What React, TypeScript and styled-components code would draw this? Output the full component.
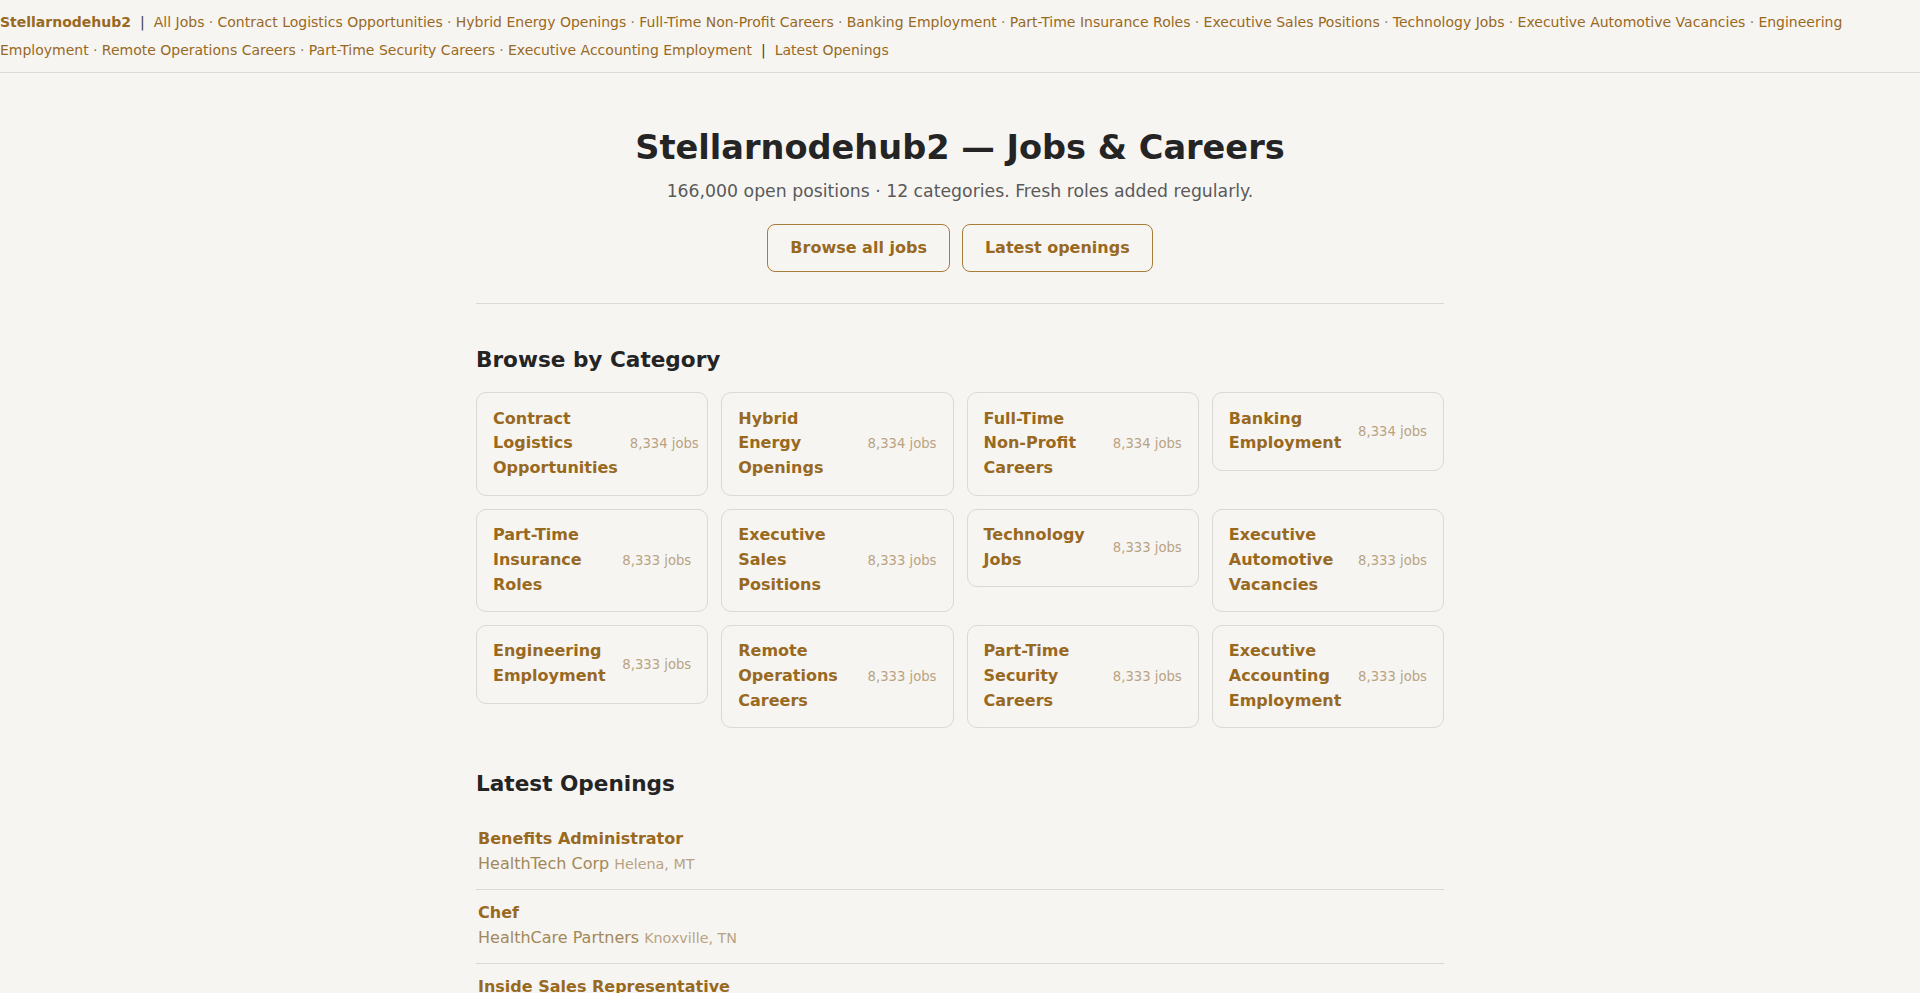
import React from 'react'
import styled, { createGlobalStyle } from 'styled-components'

const gold = '#98691f'
const tan = '#a38859'
const pale = '#b7a382'
const line = '#ddd8d0'

const GlobalStyle = createGlobalStyle`
  body {
    margin: 0;
    background: #f7f5f2;
    color: #242424;
    font-family: 'DejaVu Sans', 'Noto Sans', sans-serif;
  }

  a {
    color: ${gold};
    text-decoration: none;
  }
`

const TopNav = styled.nav`
  padding: 8px 0;
  font-size: 14px;
  line-height: 28px;
  border-bottom: 1px solid ${line};
`

const Brand = styled.a`
  font-weight: 700;
`

const Pipe = styled.span`
  margin: 0 9px;
  color: #3a3a3a;
`

const Dot = styled.span`
  margin: 0 4.3px;
  color: #8d7a5c;
`

const Main = styled.main`
  max-width: 968px;
  margin: 0 auto;
`

const Hero = styled.header`
  padding: 55px 0 31px;
  text-align: center;
  border-bottom: 1px solid ${line};
`

const Title = styled.h1`
  margin: 0 0 11px;
  font-size: 33.6px;
  line-height: 1.2;
  font-weight: 700;
`

const Lead = styled.p`
  margin: 0 0 19px;
  font-size: 17.3px;
  line-height: 1.5;
  color: #5a5a5a;
`

const ButtonRow = styled.div`
  display: flex;
  justify-content: center;
  gap: 12px;
`

const OutlineButton = styled.a`
  padding: 11px 22px;
  border: 1px solid #a87d3a;
  border-radius: 8px;
  font-size: 16px;
  line-height: 24px;
  font-weight: 700;
`

const SectionTitle = styled.h2`
  margin: 43px 0 19px;
  font-size: 21.6px;
  line-height: 1.2;
  font-weight: 700;
`

const CategoryGrid = styled.div`
  display: grid;
  grid-template-columns: repeat(4, minmax(0, 1fr));
  gap: 13px;
  align-items: start;
`

const CategoryCard = styled.a`
  display: flex;
  align-items: center;
  justify-content: space-between;
  gap: 12px;
  padding: 13.5px 16px;
  border: 1px solid ${line};
  border-radius: 10px;
`

const CardName = styled.span`
  font-size: 16px;
  line-height: 1.55;
  font-weight: 700;
`

const CardCount = styled.span`
  flex-shrink: 0;
  white-space: nowrap;
  font-size: 13.2px;
  color: ${pale};
`

const JobList = styled.ul`
  margin: 1px 0 0;
  padding: 0;
  list-style: none;
`

const JobItem = styled.li`
  padding: 11px 2px 12px;
  border-bottom: 1px solid ${line};
`

const JobTitle = styled.a`
  display: block;
  font-size: 16px;
  line-height: 24px;
  font-weight: 700;
`

const JobMeta = styled.div`
  font-size: 16px;
  line-height: 26px;
  color: ${tan};
`

const JobPlace = styled.span`
  margin-left: 5px;
  font-size: 14.3px;
  color: ${pale};
`

const categories = [
  { name: 'Contract Logistics Opportunities', count: '8,334' },
  { name: 'Hybrid Energy Openings', count: '8,334' },
  { name: 'Full-Time Non-Profit Careers', count: '8,334' },
  { name: 'Banking Employment', count: '8,334' },
  { name: 'Part-Time Insurance Roles', count: '8,333' },
  { name: 'Executive Sales Positions', count: '8,333' },
  { name: 'Technology Jobs', count: '8,333' },
  { name: 'Executive Automotive Vacancies', count: '8,333' },
  { name: 'Engineering Employment', count: '8,333' },
  { name: 'Remote Operations Careers', count: '8,333' },
  { name: 'Part-Time Security Careers', count: '8,333' },
  { name: 'Executive Accounting Employment', count: '8,333' },
]

const jobs = [
  { title: 'Benefits Administrator', company: 'HealthTech Corp', place: 'Helena, MT' },
  { title: 'Chef', company: 'HealthCare Partners', place: 'Knoxville, TN' },
  { title: 'Inside Sales Representative', company: 'Summit Retail Group', place: 'Boise, ID' },
  { title: 'Logistics Coordinator', company: 'Northline Freight', place: 'Omaha, NE' },
]

const App = () => (
  <>
    <GlobalStyle />
    <TopNav>
      <Brand href="/">Stellarnodehub2</Brand>
      <Pipe>|</Pipe>
      <a href="/jobs">All Jobs</a>
      {categories.map((c) => (
        <React.Fragment key={c.name}>
          <Dot>·</Dot>
          <a href="/category">{c.name}</a>
        </React.Fragment>
      ))}
      <Pipe>|</Pipe>
      <a href="/latest">Latest Openings</a>
    </TopNav>

    <Main>
      <Hero>
        <Title>Stellarnodehub2 — Jobs &amp; Careers</Title>
        <Lead>166,000 open positions · 12 categories. Fresh roles added regularly.</Lead>
        <ButtonRow>
          <OutlineButton href="/jobs">Browse all jobs</OutlineButton>
          <OutlineButton href="/latest">Latest openings</OutlineButton>
        </ButtonRow>
      </Hero>

      <section>
        <SectionTitle>Browse by Category</SectionTitle>
        <CategoryGrid>
          {categories.map((c) => (
            <CategoryCard key={c.name} href="/category">
              <CardName>{c.name}</CardName>
              <CardCount>{c.count} jobs</CardCount>
            </CategoryCard>
          ))}
        </CategoryGrid>
      </section>

      <section>
        <SectionTitle>Latest Openings</SectionTitle>
        <JobList>
          {jobs.map((j) => (
            <JobItem key={j.title}>
              <JobTitle href="/job">{j.title}</JobTitle>
              <JobMeta>
                {j.company}
                <JobPlace>{j.place}</JobPlace>
              </JobMeta>
            </JobItem>
          ))}
        </JobList>
      </section>
    </Main>
  </>
)

export default App
